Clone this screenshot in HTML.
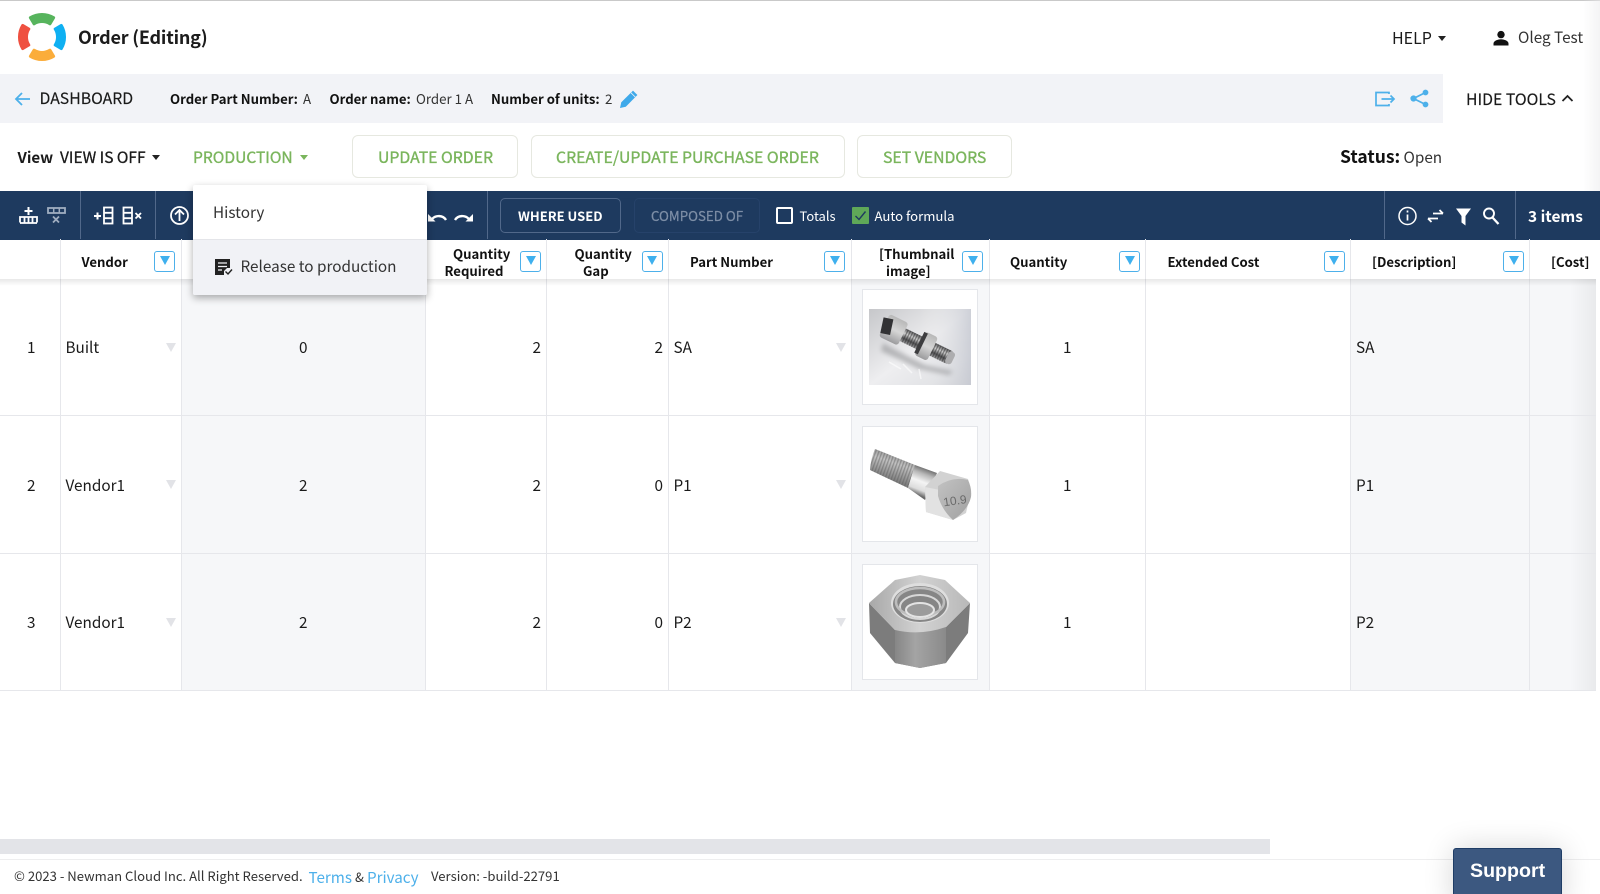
<!DOCTYPE html>
<html><head><meta charset="utf-8"><title>Order (Editing)</title>
<style>
html,body{margin:0;padding:0;background:#fff}
body{width:1600px;height:894px;position:relative;overflow:hidden;font-family:"Noto Sans CJK JP","Liberation Sans",sans-serif;color:#1a1a1a;font-size:15.3px}
.wrap{position:absolute;left:0;top:0;width:1600px;height:894px;overflow:hidden;filter:blur(.3px)}
.a{position:absolute}
.t{position:absolute;white-space:nowrap;line-height:20px;height:20px}
.b{font-weight:700}
.h{font-size:13.150px;font-weight:700;color:#111}
.g{color:#7ab55c;font-size:15.800px;-webkit-text-stroke:.35px #7ab55c}
.btn{position:absolute;top:135px;height:43px;border:1px solid #e6e8e0;border-radius:6px;box-sizing:border-box;background:#fff}
.v{position:absolute;width:1px;background:#e6e7eb}
.f{position:absolute;top:251px;width:21px;height:21px;box-sizing:border-box;border:1.5px solid #4db0ea;border-radius:3px;background:#fff}
.f:after{content:"";position:absolute;left:4.5px;top:4px;border-left:5.5px solid transparent;border-right:5.5px solid transparent;border-top:9px solid #3fb0ee}
.ar{position:absolute;border-left:5px solid transparent;border-right:5px solid transparent;border-top:9px solid #e2e3e7}
.c{position:absolute;width:0;height:0;border-left:4.5px solid transparent;border-right:4.5px solid transparent;border-top:5px solid #222}
.box{position:absolute;left:862px;width:116px;height:116px;box-sizing:border-box;border:1px solid #e4e6ea;background:#fff}
</style></head><body><div class="wrap">

<div class="a" style="left:0;top:0;width:1600px;height:1px;background:#c9c9c9"></div>
<div class="a" style="left:1583px;top:0;width:17px;height:191px;background:linear-gradient(90deg,rgba(220,220,222,0),rgba(235,235,237,.55))"></div>

<!-- logo -->
<svg class="a" style="left:14px;top:9px" width="56" height="56" viewBox="0 0 56 56" stroke-width="3" stroke-linejoin="round">
<path d="M16.400 8.700A22.500 22.500 0 0 1 39.600 8.700L36 14.800A15 15 0 0 0 20 14.800Z" fill="#57b45d" stroke="#57b45d"/>
<path d="M16.400 8.700A22.500 22.500 0 0 1 39.600 8.700L36 14.800A15 15 0 0 0 20 14.800Z" fill="#0fb0f2" stroke="#0fb0f2" transform="rotate(90 28 28)"/>
<path d="M16.400 8.700A22.500 22.500 0 0 1 39.600 8.700L36 14.800A15 15 0 0 0 20 14.800Z" fill="#fbad3b" stroke="#fbad3b" transform="rotate(180 28 28)"/>
<path d="M16.400 8.700A22.500 22.500 0 0 1 39.600 8.700L36 14.800A15 15 0 0 0 20 14.800Z" fill="#ef5040" stroke="#ef5040" transform="rotate(270 28 28)"/>
</svg>
<div class="t b" style="left:78px;top:27px;font-size:18px;letter-spacing:-.2px;color:#1c1c1c">Order (Editing)</div>

<div class="t" style="left:1392px;top:27px;font-size:16px">HELP</div>
<div class="c" style="left:1438px;top:36px"></div>
<svg class="a" style="left:1492px;top:30px" width="18" height="16" viewBox="0 0 18 16"><circle cx="9" cy="4.600" r="3.700" fill="#111"/><path d="M1.500 15.500v-2c0-2.800 5-4.200 7.500-4.200s7.500 1.400 7.500 4.200v2z" fill="#111"/></svg>
<div class="t" style="left:1518px;top:27px;color:#333">Oleg Test</div>

<!-- bar -->
<div class="a" style="left:0;top:74px;width:1443px;height:49px;background:#f2f3f7"></div>
<svg class="a" style="left:14px;top:90px" width="18" height="18" viewBox="0 0 18 18" fill="none" stroke="#4db0ea" stroke-width="1.800"><path d="M16 9H2M8 3L2 9l6 6"/></svg>
<div class="t" style="left:39.500px;top:88px;font-size:15.800px;-webkit-text-stroke:.15px #1a1a1a">DASHBOARD</div>
<div class="t h" style="left:170px;top:89px">Order Part Number:</div>
<div class="t" style="left:303px;top:89px;font-size:13.300px;color:#333">A</div>
<div class="t h" style="left:329.500px;top:89px">Order name:</div>
<div class="t" style="left:416px;top:89px;font-size:13.300px;color:#333">Order 1 A</div>
<div class="t h" style="left:491px;top:89px">Number of units:</div>
<div class="t" style="left:605px;top:89px;font-size:13.300px;color:#333">2</div>
<svg class="a" style="left:619px;top:89px" width="20" height="20" viewBox="0 0 20 20"><path d="M1 19l1.300-5.800L14 1.600 18.400 6 6.800 17.700z" fill="#3fa9ea"/><path d="M12 3.800l4.200 4.200" stroke="#f2f3f7" stroke-width=".8"/></svg>
<svg class="a" style="left:1374px;top:90px" width="22" height="18" viewBox="0 0 22 18" fill="none" stroke="#4db0ea" stroke-width="1.700"><path d="M15 4V2.500H2v13h13V14M7.500 9H20M16.500 5.500L20 9l-3.500 3.500"/></svg>
<svg class="a" style="left:1410px;top:89px" width="19" height="19" viewBox="0 0 19 19" fill="#4db0ea" stroke="#4db0ea"><circle cx="15.500" cy="3.500" r="2.400"/><circle cx="3.500" cy="9.500" r="2.600"/><circle cx="15.500" cy="15.500" r="2.400"/><path d="M15.500 3.500L3.500 9.500l12 6" fill="none" stroke-width="1.700"/></svg>
<div class="t" style="left:1466px;top:88.500px;font-size:15.800px;-webkit-text-stroke:.15px #1a1a1a">HIDE TOOLS</div>
<svg class="a" style="left:1561px;top:94px" width="13" height="9" viewBox="0 0 13 9" fill="none" stroke="#222" stroke-width="1.800"><path d="M1.500 7L6.500 2l5 5"/></svg>

<!-- view row -->
<div class="t b" style="left:17.500px;top:147px;font-size:15.100px">View</div>
<div class="t" style="left:60px;top:147px;font-size:15.500px;-webkit-text-stroke:.3px #1a1a1a">VIEW IS OFF</div>
<div class="c" style="left:152px;top:155px"></div>
<div class="t g" style="left:193px;top:147px;font-size:15.600px">PRODUCTION</div>
<div class="c" style="left:300px;top:155px;border-top-color:#7ab55c"></div>
<div class="btn" style="left:352px;width:166px"></div>
<div class="t g" style="left:378px;top:147px">UPDATE ORDER</div>
<div class="btn" style="left:531px;width:314px"></div>
<div class="t g" style="left:556px;top:147px">CREATE/UPDATE PURCHASE ORDER</div>
<div class="btn" style="left:857px;width:155px"></div>
<div class="t g" style="left:883px;top:147px">SET VENDORS</div>
<div class="t b" style="left:1340px;top:147px;font-size:17.500px;color:#111">Status:</div>
<div class="t" style="left:1403.500px;top:146.500px;color:#333">Open</div>

<!-- toolbar -->
<div class="a" style="left:0;top:191px;width:1600px;height:48.500px;background:#1e3a5f"></div>
<div class="a" style="left:80px;top:191px;width:1px;height:48px;background:#51688a"></div>
<div class="a" style="left:155px;top:191px;width:1px;height:48px;background:#51688a"></div>
<div class="a" style="left:487px;top:191px;width:1px;height:48px;background:#51688a"></div>
<div class="a" style="left:1384px;top:191px;width:1px;height:48px;background:#51688a"></div>
<div class="a" style="left:1515px;top:191px;width:1px;height:48px;background:#51688a"></div>
<svg class="a" style="left:0;top:191px" width="500" height="48" viewBox="0 191 500 48" fill="none" stroke="#fff">
 <path d="M28.500 207v8M24.500 211h8" stroke-width="2"/>
 <path d="M20 222.500v-5.500h17v5.500M20 223h4.500v-5.500M24.500 223h4v-5.500M28.500 223h4v-5.500M32.500 223h4.500" stroke-width="1.800"/>
 <rect x="48" y="208" width="17" height="5" stroke="#9fadc0" stroke-width="1.800"/><path d="M53.700 208v5M59.300 208v5" stroke="#9fadc0" stroke-width="1.500"/>
 <path d="M53 216.500l6 6M59 216.500l-6 6" stroke="#9fadc0" stroke-width="1.800"/>
 <path d="M94 216h7M97.500 212.500v7" stroke-width="2"/>
 <rect x="104" y="207.500" width="8.500" height="16" stroke-width="1.800"/><path d="M104 212.800h8.500M104 218.200h8.500" stroke-width="1.800"/>
 <rect x="123.500" y="207.500" width="8.500" height="16" stroke-width="1.800"/><path d="M123.500 212.800h8.500M123.500 218.200h8.500" stroke-width="1.800"/>
 <path d="M135.500 213l5.500 5.500M141 213l-5.500 5.500" stroke-width="1.800"/>
 <circle cx="179.500" cy="215.500" r="8.500" stroke-width="1.800"/><path d="M179.500 221v-10.500M175 214.500l4.500-4.500 4.500 4.500" stroke-width="1.800"/>
 <path d="M446 220c-3-5-10-5-14-1" stroke-width="2.400"/><path d="M428 214v7.500h7.500z" fill="#fff" stroke="none"/>
 <path d="M455 220c3-5 10-5 14-1" stroke-width="2.400"/><path d="M473 214v7.500h-7.500z" fill="#fff" stroke="none"/>
</svg>
<div class="a" style="left:500px;top:198px;width:121px;height:35px;box-sizing:border-box;border:1px solid #51688a;border-radius:5px"></div>
<div class="t" style="left:518px;top:206px;font-size:13px;font-weight:700;color:#fff">WHERE USED</div>
<div class="a" style="left:634px;top:198px;width:126px;height:35px;box-sizing:border-box;border:1px solid #26426a;border-radius:5px"></div>
<div class="t" style="left:651px;top:206px;font-size:13.300px;-webkit-text-stroke:.25px #7d8ea6;color:#7d8ea6">COMPOSED OF</div>
<div class="a" style="left:776px;top:207px;width:17px;height:17px;box-sizing:border-box;border:2px solid #fff;border-radius:2px"></div>
<div class="t" style="left:799.500px;top:206px;font-size:13px;color:#fff">Totals</div>
<div class="a" style="left:852px;top:207px;width:17px;height:17px;background:#5fa858;border-radius:1px"></div>
<svg class="a" style="left:852px;top:207px" width="17" height="17" viewBox="0 0 17 17" fill="none" stroke="#1e3a5f" stroke-width="1.400"><path d="M3.500 9l3.500 3.500 6.500-8"/></svg>
<div class="t" style="left:874.500px;top:206px;font-size:13.150px;color:#fff">Auto formula</div>
<svg class="a" style="left:1396px;top:205px" width="106" height="22" viewBox="1396 205 106 22" fill="none" stroke="#fff">
 <circle cx="1407.500" cy="216" r="8.500" stroke-width="1.500"/><path d="M1407.500 214.500v6M1407.500 210.500v2" stroke-width="1.700"/>
 <path d="M1433 213.500h10M1439.500 210l3.500 3.500" stroke-width="1.800"/><path d="M1438 218.500h-10M1431.500 222l-3.500-3.500" stroke-width="1.800"/>
 <path d="M1456 208.500h15l-5.500 7.500v9.500l-4-3v-6.500z" fill="#fff" stroke="none"/>
 <circle cx="1489" cy="213.500" r="5" stroke-width="1.900"/><path d="M1492.500 217.500l6 6.500" stroke-width="2.300"/>
</svg>
<div class="t b" style="left:1528px;top:206px;font-size:15.400px;color:#fff">3 items</div>

<!-- table backgrounds -->
<div class="a" style="left:182px;top:279px;width:244px;height:412px;background:#f6f7f9"></div>
<div class="a" style="left:851px;top:279px;width:138px;height:412px;background:#f6f7f9"></div>
<div class="a" style="left:1350px;top:279px;width:246px;height:412px;background:#f6f7f9"></div>
<div class="a" style="left:1570px;top:279px;width:26px;height:412px;background:linear-gradient(90deg,rgba(225,226,230,0),#e9eaec)"></div>

<!-- row lines -->
<div class="a" style="left:0;top:415px;width:1596px;height:1px;background:#e6e7eb"></div>
<div class="a" style="left:0;top:553px;width:1596px;height:1px;background:#e6e7eb"></div>
<div class="a" style="left:0;top:690px;width:1596px;height:1px;background:#e6e7eb"></div>
<!-- col lines -->
<div class="v" style="left:60px;top:239px;height:452px"></div>
<div class="v" style="left:181px;top:239px;height:452px"></div>
<div class="v" style="left:425px;top:239px;height:452px"></div>
<div class="v" style="left:546px;top:239px;height:452px"></div>
<div class="v" style="left:668px;top:239px;height:452px"></div>
<div class="v" style="left:851px;top:239px;height:452px"></div>
<div class="v" style="left:989px;top:239px;height:452px"></div>
<div class="v" style="left:1145px;top:239px;height:452px"></div>
<div class="v" style="left:1350px;top:239px;height:452px"></div>
<div class="v" style="left:1529px;top:239px;height:452px"></div>

<div class="a" style="left:0;top:279px;width:1596px;height:7px;background:linear-gradient(180deg,rgba(0,0,0,.09),rgba(0,0,0,0))"></div>

<!-- headers -->
<div class="t h" style="left:81.500px;top:252px">Vendor</div><div class="f" style="left:154px"></div>
<div class="t h" style="left:453px;top:244px">Quantity</div><div class="t h" style="left:444.500px;top:261px">Required</div><div class="f" style="left:520px"></div>
<div class="t h" style="left:574.500px;top:244px">Quantity</div><div class="t h" style="left:583px;top:261px">Gap</div><div class="f" style="left:641.500px"></div>
<div class="t h" style="left:690px;top:252px">Part Number</div><div class="f" style="left:824px"></div>
<div class="t h" style="left:879px;top:244px">[Thumbnail</div><div class="t h" style="left:886px;top:261px">image]</div><div class="f" style="left:962px"></div>
<div class="t h" style="left:1010px;top:252px">Quantity</div><div class="f" style="left:1119px"></div>
<div class="t h" style="left:1167.500px;top:252px">Extended Cost</div><div class="f" style="left:1323.500px"></div>
<div class="t h" style="left:1372px;top:252px">[Description]</div><div class="f" style="left:1503px"></div>
<div class="t h" style="left:1551px;top:252px">[Cost]</div>

<!-- row 1 -->
<div class="t" style="left:27px;top:337px">1</div><div class="t" style="left:65.500px;top:337px">Built</div><div class="ar" style="left:166px;top:343px"></div>
<div class="t" style="left:299px;top:337px">0</div><div class="t" style="left:532.500px;top:337px">2</div><div class="t" style="left:654.500px;top:337px">2</div><div class="t" style="left:673.500px;top:337px">SA</div><div class="ar" style="left:836px;top:343px"></div>
<div class="t" style="left:1063px;top:337px">1</div><div class="t" style="left:1356px;top:337px">SA</div>
<!-- row 2 -->
<div class="t" style="left:27px;top:475px">2</div><div class="t" style="left:65.500px;top:475px">Vendor1</div><div class="ar" style="left:166px;top:480px"></div>
<div class="t" style="left:299px;top:475px">2</div><div class="t" style="left:532.500px;top:475px">2</div><div class="t" style="left:654.500px;top:475px">0</div><div class="t" style="left:673.500px;top:475px">P1</div><div class="ar" style="left:836px;top:480px"></div>
<div class="t" style="left:1063px;top:475px">1</div><div class="t" style="left:1356px;top:475px">P1</div>
<!-- row 3 -->
<div class="t" style="left:27px;top:612px">3</div><div class="t" style="left:65.500px;top:612px">Vendor1</div><div class="ar" style="left:166px;top:618px"></div>
<div class="t" style="left:299px;top:612px">2</div><div class="t" style="left:532.500px;top:612px">2</div><div class="t" style="left:654.500px;top:612px">0</div><div class="t" style="left:673.500px;top:612px">P2</div><div class="ar" style="left:836px;top:618px"></div>
<div class="t" style="left:1063px;top:612px">1</div><div class="t" style="left:1356px;top:612px">P2</div>

<!-- thumbs -->
<div class="box" style="top:289px"></div>
<svg class="a" style="left:869px;top:309px" width="102" height="76" viewBox="0 0 102 76">
 <defs>
 <linearGradient id="bg1" x1="0" y1="0" x2="1" y2="1"><stop offset="0" stop-color="#c6c7ca"/><stop offset=".5" stop-color="#eeeef0"/><stop offset=".8" stop-color="#e2e3e6"/><stop offset="1" stop-color="#cfd0d4"/></linearGradient>
 <linearGradient id="bg1b" x1="1" y1="0" x2="0" y2="0"><stop offset="0" stop-color="#c6c9d2" stop-opacity=".8"/><stop offset=".5" stop-color="#eee" stop-opacity="0"/></linearGradient>
 <linearGradient id="rod" x1="0" y1="0" x2="0" y2="1"><stop offset="0" stop-color="#5c5c5e"/><stop offset=".35" stop-color="#cfcfcf"/><stop offset=".7" stop-color="#505052"/><stop offset="1" stop-color="#a4a4a6"/></linearGradient>
 <linearGradient id="hx" x1="0" y1="0" x2="0" y2="1"><stop offset="0" stop-color="#b8b8b8"/><stop offset=".5" stop-color="#d6d6d6"/><stop offset="1" stop-color="#9b9b9d"/></linearGradient>
 <pattern id="thr" width="2.600" height="20" patternUnits="userSpaceOnUse"><rect width="1.200" height="20" fill="#2c2c2c" opacity=".5"/></pattern>
 <filter id="bl"><feGaussianBlur stdDeviation="2.500"/></filter>
 </defs>
 <rect width="102" height="76" fill="url(#bg1)"/>
 <rect width="102" height="76" fill="url(#bg1b)"/>
 <path d="M14 34L56 56 84 62 80 66 50 60 12 42z" fill="#8d8e91" opacity=".55" filter="url(#bl)"/>
 <g transform="translate(24 21) rotate(26)">
  <rect x="4" y="-7" width="58" height="14" fill="url(#rod)"/>
  <rect x="12" y="-7" width="19" height="14" fill="url(#thr)"/>
  <rect x="42" y="-7" width="21" height="14" fill="url(#thr)"/>
  <rect x="60" y="-6.500" width="7" height="13" rx="3" fill="#adadaf"/>
  <rect x="-10" y="-13" width="21" height="25" rx="3" fill="url(#hx)"/>
  <path d="M-12-9h10v16h-10z" fill="#323234" transform="rotate(-14 -6 0)"/>
  <rect x="30" y="-13" width="14" height="26" rx="3" fill="url(#hx)"/>
  <rect x="29" y="-12" width="4" height="23" fill="#3d3d3f"/>
 </g>
 <path d="M20 53l12 7M50 60l2 10M34 55l9 9" stroke="#fff" stroke-width="1.500" opacity=".6"/>
</svg>

<div class="box" style="top:426px"></div>
<svg class="a" style="left:862px;top:426px" width="116" height="116" viewBox="0 0 116 116">
 <defs>
 <linearGradient id="sh" gradientUnits="userSpaceOnUse" x1="63" y1="42" x2="53" y2="68"><stop offset="0" stop-color="#6e6e6e"/><stop offset=".22" stop-color="#b8b8b8"/><stop offset=".5" stop-color="#f4f4f4"/><stop offset=".8" stop-color="#dcdcdc"/><stop offset="1" stop-color="#6a6a6a"/></linearGradient>
 <linearGradient id="th2" gradientUnits="userSpaceOnUse" x1="36" y1="26" x2="27" y2="53"><stop offset="0" stop-color="#8a8a8a"/><stop offset=".4" stop-color="#c2c2c2"/><stop offset="1" stop-color="#7e7e7e"/></linearGradient>
 <pattern id="thr2" width="3" height="30" patternUnits="userSpaceOnUse" patternTransform="rotate(20)"><rect width="1.300" height="30" fill="#5c5c5c" opacity=".45"/></pattern>
 <linearGradient id="fc" x1="0" y1="0" x2="1" y2="1"><stop offset="0" stop-color="#c2c2c2"/><stop offset="1" stop-color="#a0a0a0"/></linearGradient>
 </defs>
 <path d="M13 23Q9 32 8 44L46 62 53 39z" fill="url(#th2)"/>
 <path d="M13 23Q9 32 8 44L46 62 53 39z" fill="url(#thr2)"/>
 <path d="M53 39L75 47 63 74 46 62z" fill="url(#sh)"/>
 <path d="M63 61L78 45 106 53 109 65 104 87 91 94 64 86z" fill="#d2d2d2"/>
 <path d="M63 61L78 64 91 94 64 86z" fill="#e2e2e2"/>
 <path d="M76 60Q90 50 106 54 110 62 109 71 106 84 91 94 80 84 76 70z" fill="url(#fc)"/>
 <text x="81" y="79" transform="rotate(-8 91 73)" font-family="Liberation Sans,sans-serif" font-size="12" fill="#6a6a6a">10.9</text>
</svg>

<div class="box" style="top:564px"></div>
<svg class="a" style="left:862px;top:564px" width="116" height="116" viewBox="0 0 116 116">
 <defs>
 <linearGradient id="top3" x1="0" y1="0" x2="1" y2="0"><stop offset="0" stop-color="#a8a8a8"/><stop offset=".5" stop-color="#d2d2d2"/><stop offset="1" stop-color="#b8b8b8"/></linearGradient>
 <linearGradient id="s1" x1="0" y1="0" x2="1" y2="0"><stop offset="0" stop-color="#868686"/><stop offset=".4" stop-color="#a4a4a4"/><stop offset="1" stop-color="#8a8a8a"/></linearGradient>
 </defs>
 <path d="M7 39L8 69 33 99 58 104 84 99 106 69 108 39 84 63 33 66z" fill="#7c7c7c"/>
 <path d="M33 66L33 99 58 104 84 99 84 63z" fill="url(#s1)"/>
 <path d="M7 39L33 16 58 11 83 16 108 39 84 63Q58 72 33 66z" fill="url(#top3)"/>
 <ellipse cx="58" cy="39" rx="29" ry="20" fill="#dedede"/>
 <ellipse cx="58" cy="40" rx="27" ry="18" fill="#868686"/>
 <ellipse cx="58" cy="43" rx="20" ry="12" fill="none" stroke="#d8d8d8" stroke-width="2"/>
 <ellipse cx="58" cy="38" rx="24" ry="14" fill="none" stroke="#bdbdbd" stroke-width="2.500"/>
 <ellipse cx="58" cy="46" rx="14" ry="7" fill="#9c9c9c" stroke="#e4e4e4" stroke-width="2"/>
</svg>

<!-- dropdown -->
<div class="a" style="left:193px;top:185px;width:234px;height:110px;background:#fff;border-radius:2px;box-shadow:0 3px 8px rgba(0,0,0,.32)"></div>
<div class="a" style="left:193px;top:239px;width:234px;height:56px;background:#f1f2f6;border-top:1px solid #e4e5e9;box-sizing:border-box;border-radius:0 0 2px 2px"></div>
<div class="t" style="left:213px;top:202px;color:#333">History</div>
<svg class="a" style="left:214px;top:258px" width="20" height="18" viewBox="0 0 20 18"><path d="M1 1h15v9h-3l-3 3v4H1z" fill="#222"/><path d="M4 5h9M4 8.500h9M4 12h4" stroke="#f1f2f6" stroke-width="1.300"/><path d="M11.500 13.500l2.500 2.500 4-4.500" fill="none" stroke="#222" stroke-width="1.400"/></svg>
<div class="t" style="left:240.500px;top:256px;color:#333">Release to production</div>

<!-- scrollbar -->
<div class="a" style="left:0;top:839px;width:1270px;height:15px;background:#e3e4e8"></div>
<!-- footer -->
<div class="a" style="left:0;top:859px;width:1600px;height:35px;background:#fff;border-top:1px solid #eeeeef;box-sizing:border-box"></div>
<div class="t" style="left:14px;top:866px;font-size:13.100px;color:#333">© 2023 - Newman Cloud Inc. All Right Reserved.</div>
<div class="t" style="left:308.500px;top:866.500px;font-size:15.200px;color:#4db0ea">Terms</div>
<div class="t" style="left:355px;top:867px;font-size:13.100px;color:#333">&amp;</div>
<div class="t" style="left:367px;top:866.500px;font-size:15.200px;color:#4db0ea">Privacy</div>
<div class="t" style="left:431px;top:866px;font-size:13.100px;color:#333">Version: -build-22791</div>

<!-- support -->
<div class="a" style="left:1453px;top:848px;width:109px;height:60px;box-sizing:border-box;background:#3c5880;border:1px solid #1f3d66;border-radius:3px;box-shadow:0 0 30px rgba(0,0,0,.16)"></div>
<div class="t" style="left:1470px;top:861px;font-family:'Liberation Sans',sans-serif;font-size:19.600px;font-weight:700;color:#fff">Support</div>
</div></body></html>
